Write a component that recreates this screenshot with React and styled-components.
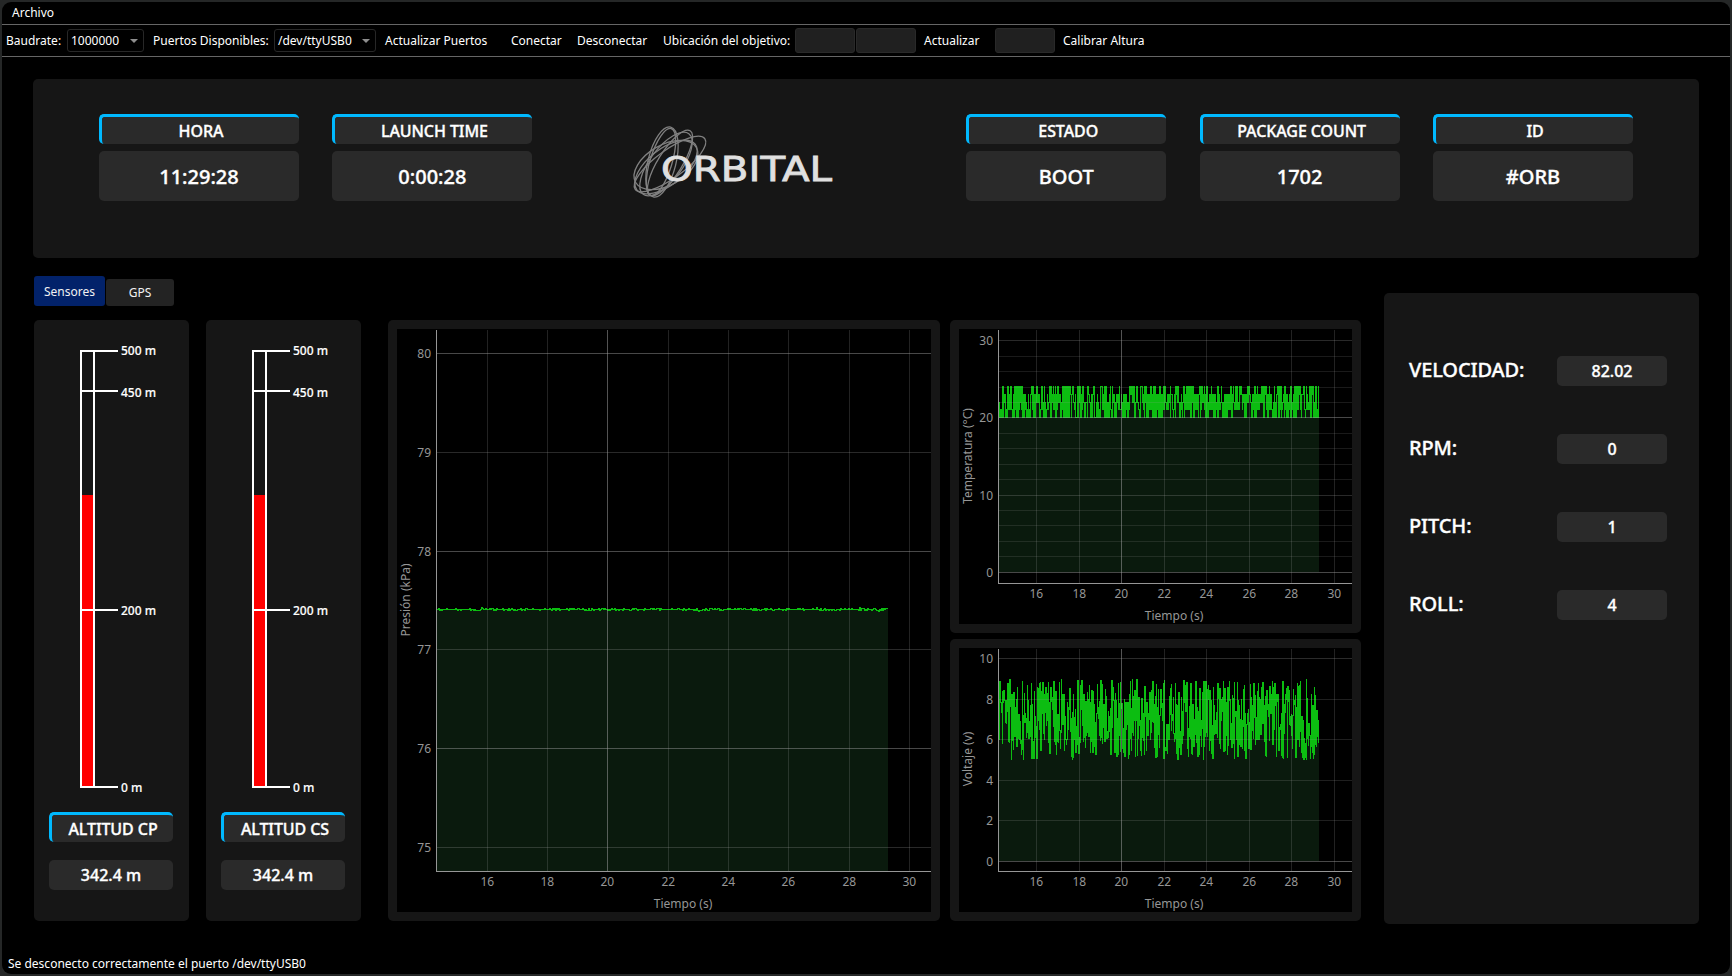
import React from "react";
import styled, { createGlobalStyle } from "styled-components";

const GlobalStyle = createGlobalStyle`
  * { box-sizing: border-box; }
  body {
    margin: 0;
    background: #252727;
    color: #fff;
    font: 12px/16px "Noto Sans", "Open Sans", sans-serif;
  }
`;

const Window = styled.div`
  display: flex;
  flex-direction: column;
  width: 1728px;
  height: 972px;
  margin: 2px;
  background: #000;
  border-radius: 9px;
  overflow: hidden;
`;

const MenuBar = styled.nav`
  height: 23px;
  padding: 3px 10px 0;
  border-bottom: 1px solid #666;
`;

const ToolBar = styled.div`
  display: flex;
  align-items: center;
  height: 32px;
  padding-left: 4px;
  border-bottom: 1px solid #666;
`;

const ToolText = styled.span`
  flex: 0 0 ${(p) => p.$w}px;
  white-space: nowrap;
`;

const Combo = styled.div`
  display: flex;
  align-items: center;
  justify-content: space-between;
  width: ${(p) => p.$w}px;
  height: 23px;
  margin-right: 9px;
  padding: 0 5px 0 3px;
  border: 1px solid #272727;
  border-radius: 3px;
`;

const Arrow = styled.i`
  border: 4px solid transparent;
  border-top: 4px solid #8e8e8e;
  border-bottom: 0;
`;

const Field = styled.div`
  width: 60px;
  height: 25px;
  margin-right: ${(p) => p.$gap}px;
  border: 1px solid #292929;
  border-radius: 3px;
  background: #202020;
`;

const Panel = styled.section`
  background: #161616;
  border-radius: 5px;
`;

const Header = styled(Panel)`
  display: grid;
  grid-template-columns: 200px 200px 1fr 200px 200px 200px;
  column-gap: 33.4px;
  height: 179px;
  margin: 22px 31px 0;
  padding: 35px 66px 0;
`;

const Title = styled.div`
  height: 30px;
  padding-left: 1px;
  border-top: 3px solid #00b9ff;
  border-left: 3px solid #00b9ff;
  border-radius: 5px;
  background: #2a2a2a;
  font-size: 16px;
  font-weight: 500;
  line-height: 28px;
  letter-spacing: -0.08px;
  text-align: center;
  -webkit-text-stroke: 0.35px #fff;
`;

const Value = styled.div`
  height: ${(p) => (p.$large ? 50 : 30)}px;
  border-radius: 5px;
  background: #2a2a2a;
  font-size: ${(p) => (p.$large ? 20 : 16)}px;
  font-weight: 500;
  line-height: ${(p) => (p.$large ? 52 : 30)}px;
  text-align: center;
  -webkit-text-stroke: 0.35px #fff;
`;

const Card = styled.div`
  display: flex;
  flex-direction: column;
  gap: 7px;
`;

const Logo = styled.svg`
  width: 230px;
  height: 100px;
  margin: -4px 0 0 50px;
`;

const Main = styled.main`
  display: flex;
  justify-content: space-between;
  height: 666px;
  padding: 0 31px 0 32px;
`;

const TabArea = styled.div`
  width: 1327px;
  padding-top: 18px;
`;

const Tabs = styled.div`
  display: flex;
  align-items: flex-end;
  gap: 1px;
  height: 30px;
`;

const Tab = styled.button`
  width: ${(p) => (p.$active ? 71 : 68)}px;
  height: ${(p) => (p.$active ? 30 : 27)}px;
  padding: ${(p) => (p.$active ? "2px 0 0" : "0")};
  border: 0;
  border-radius: 3px;
  background: ${(p) => (p.$active ? "#02226a" : "#232323")};
  color: #f2f2f2;
  font: inherit;
`;

const Sensors = styled.div`
  display: flex;
  height: 601px;
  margin-top: 14px;
`;

const AltitudePanel = styled(Panel)`
  display: flex;
  flex-direction: column;
  width: 155px;
  margin-right: ${(p) => p.$gap}px;
  padding: 22px 16px 31px 15px;
`;

const Gauge = styled.svg`
  width: 124px;
  height: 458px;
  flex: none;
  margin-bottom: 12px;
`;

const AltitudeTitle = styled(Title)`
  margin-bottom: 18px;
`;

const PlotPanel = styled(Panel)`
  padding: 9px;
`;

const PlotColumn = styled.div`
  display: flex;
  flex-direction: column;
  gap: 6px;
  margin-left: 10px;
`;

const Plot = styled.svg`
  display: block;
  background: #000;
`;

const Readings = styled(Panel)`
  display: flex;
  flex-direction: column;
  gap: 48px;
  width: 315px;
  height: 631px;
  margin-top: 35px;
  padding: 63px 32px 0 25px;
`;

const Reading = styled.div`
  display: grid;
  grid-template-columns: 1fr 110px;
`;

const ReadingName = styled.span`
  font-size: 20px;
  font-weight: 500;
  line-height: 27px;
  letter-spacing: -0.12px;
  -webkit-text-stroke: 0.35px #fff;
`;

const StatusBar = styled.footer`
  margin-top: 32px;
  padding-left: 6px;
`;

function TitledValue({ title, value }) {
  return (
    <Card>
      <Title>{title}</Title>
      <Value $large>{value}</Value>
    </Card>
  );
}

const orbits = [
  [46, 52, 14, 36, 14],
  [45, 52, 11, 35, 17],
  [54, 53, 12, 38, 32],
  [50, 54, 16, 38, 37],
  [54, 54, 14, 43, 54],
  [50, 57, 18, 37, 52],
  [50, 55, 20, 35, 60],
];

function OrbitalLogo() {
  return (
    <Logo viewBox="0 0 230 100">
      <g fill="none" stroke="#d8d8d8" strokeWidth="1.3" opacity="0.55">
        {orbits.map(([cx, cy, rx, ry, a], i) => (
          <ellipse key={i} cx={cx} cy={cy} rx={rx} ry={ry} transform={`rotate(${a} ${cx} ${cy})`} />
        ))}
      </g>
      <text
        x="45"
        y="70.5"
        fontFamily="DejaVu Sans, sans-serif"
        fontSize="34"
        fill="#e0e0e0"
        stroke="#e0e0e0"
        strokeWidth="0.8"
        textLength="171"
        lengthAdjust="spacingAndGlyphs"
      >
        ORBITAL
      </text>
    </Logo>
  );
}

const marks = [
  [8, "500 m", 13],
  [48, "450 m", 55],
  [267, "200 m", 273],
  [444, "0 m", 450],
];

function Altitude({ title, value, gap }) {
  return (
    <AltitudePanel $gap={gap}>
      <Gauge viewBox="0 0 124 458" shapeRendering="crispEdges">
        <rect x="33" y="153" width="11" height="293" fill="#f00" />
        <g fill="#fff">
          <rect x="31" y="8" width="2" height="438" />
          <rect x="44" y="8" width="2" height="438" />
          {marks.map(([y, label, base]) => (
            <g key={label}>
              <rect x="31" y={y} width="38" height="2" />
              <text x="72" y={base} fontSize="12" fontWeight="500" stroke="#fff" strokeWidth="0.15">
                {label}
              </text>
            </g>
          ))}
        </g>
      </Gauge>
      <AltitudeTitle>{title}</AltitudeTitle>
      <Value>{value}</Value>
    </AltitudePanel>
  );
}

function randomSource(seed) {
  let s = seed;
  return () => {
    s = (s * 1664525 + 1013904223) % 4294967296;
    return s / 4294967296;
  };
}

// One vertical span per pixel column, joined to the last sample of the column before.
function makeSpans({ x0, x1, seed, extra, sample }) {
  const rnd = randomSource(seed);
  const spans = [];
  let last = sample(rnd);
  for (let x = x0; x < x1; x += 1) {
    const values = [last, sample(rnd)];
    for (let room = extra; room > 0; room -= 1) {
      if (rnd() < room) values.push(sample(rnd));
    }
    last = values[values.length - 1];
    spans.push([x, Math.round(Math.min(...values)), Math.round(Math.max(...values))]);
  }
  return spans;
}

function Chart({ w, h, axisX, axisY, xs, rows, minor = [], spans, base, name, nameY, tickY, timeX, timeY }) {
  const area = spans.map(([x, top]) => `M${x} ${top}h1V${base}h-1z`).join("");
  const line = spans.map(([x, top, bottom]) => `M${x} ${top}h1V${bottom + 1}h-1z`).join("");
  return (
    <Plot width={w} height={h} viewBox={`0 0 ${w} ${h}`} shapeRendering="crispEdges">
      <path d={area} fill="#0a1a0d" />
      <path d={line} fill="#0cbd11" />
      <g fill="#a0a0a0">
        {xs.map((x, i) => (
          <rect key={x} x={x} y="1" width="1" height={axisY - 1} opacity={i === 2 ? 0.52 : 0.21} />
        ))}
        {rows.map(([y, , o]) => (
          <rect key={y} x={axisX} y={y} width={w - axisX} height="1" opacity={o * 1.6} />
        ))}
        {minor.map((y) => (
          <rect key={y} x={axisX} y={y} width={w - axisX} height="1" opacity="0.16" />
        ))}
      </g>
      <g fill="#969696">
        <rect x={axisX} y="1" width="1" height={axisY} />
        <rect x={axisX} y={axisY} width={w - axisX} height="1" />
        <g fontSize="12">
          {rows.map(([y, label]) => (
            <text key={y} x={axisX - 5} y={y + 5} textAnchor="end">{label}</text>
          ))}
          {xs.map((x, i) => (
            <text key={x} x={x + 0.3} y={tickY} textAnchor="middle">{16 + i * 2}</text>
          ))}
          <text x={timeX} y={timeY} textAnchor="middle">Tiempo (s)</text>
          <text transform={`translate(13 ${nameY}) rotate(-90)`} textAnchor="middle">{name}</text>
        </g>
      </g>
    </Plot>
  );
}

const pressure = {
  w: 534, h: 583, axisX: 39, axisY: 542,
  xs: [90, 150, 210, 271, 331, 391, 452, 512],
  rows: [[24, 80, 0.28], [123, 79, 0.16], [222, 78, 0.28], [320, 77, 0.16], [419, 76, 0.28], [518, 75, 0.16]],
  spans: makeSpans({ x0: 40, x1: 491, seed: 7, extra: 0, sample: (r) => 280 + (r() + r() + r() - 1.5) * 1.25 }),
  base: 542, name: "Presión (kPa)", nameY: 271, tickY: 557, timeX: 286, timeY: 579,
};

const smallXs = [77, 120, 162, 205, 247, 290, 332, 375];

const temperature = {
  w: 393, h: 295, axisX: 39, axisY: 254, xs: smallXs,
  rows: [[11, 30, 0.16], [88, 20, 0.28], [166, 10, 0.16], [243, 0, 0.28]],
  minor: [27, 42, 58, 73, 104, 119, 135, 150, 181, 196, 212, 227],
  spans: makeSpans({ x0: 40, x1: 360, seed: 21, extra: 1.5, sample: (r) => 88 - Math.floor(r() * 5) * 7.7 }),
  base: 243, name: "Temperatura (°C)", nameY: 127, tickY: 269, timeX: 215, timeY: 291,
};

const voltage = {
  w: 393, h: 264, axisX: 39, axisY: 223, xs: smallXs,
  rows: [[10, 10, 0.17], [51, 8, 0.12], [91, 6, 0.12], [132, 4, 0.12], [172, 2, 0.12], [213, 0, 0.28]],
  spans: makeSpans({ x0: 40, x1: 360, seed: 35, extra: 1.3, sample: (r) => 111.5 - r() * 81 }),
  base: 213, name: "Voltaje (v)", nameY: 111, tickY: 238, timeX: 215, timeY: 260,
};

const readings = [["VELOCIDAD:", "82.02"], ["RPM:", "0"], ["PITCH:", "1"], ["ROLL:", "4"]];

export default function App() {
  return (
    <>
      <GlobalStyle />
      <Window>
        <MenuBar>Archivo</MenuBar>
        <ToolBar>
          <ToolText $w={61}>Baudrate:</ToolText>
          <Combo $w={77}>1000000<Arrow /></Combo>
          <ToolText $w={121}>Puertos Disponibles:</ToolText>
          <Combo $w={102}>/dev/ttyUSB0<Arrow /></Combo>
          <ToolText $w={126}>Actualizar Puertos</ToolText>
          <ToolText $w={66}>Conectar</ToolText>
          <ToolText $w={86}>Desconectar</ToolText>
          <ToolText $w={132}>Ubicación del objetivo:</ToolText>
          <Field $gap={1} />
          <Field $gap={8} />
          <ToolText $w={71}>Actualizar</ToolText>
          <Field $gap={8} />
          <ToolText $w={90}>Calibrar Altura</ToolText>
        </ToolBar>
        <Header>
          <TitledValue title="HORA" value="11:29:28" />
          <TitledValue title="LAUNCH TIME" value="0:00:28" />
          <OrbitalLogo />
          <TitledValue title="ESTADO" value="BOOT" />
          <TitledValue title="PACKAGE COUNT" value="1702" />
          <TitledValue title="ID" value="#ORB" />
        </Header>
        <Main>
          <TabArea>
            <Tabs>
              <Tab $active>Sensores</Tab>
              <Tab>GPS</Tab>
            </Tabs>
            <Sensors>
              <Altitude title="ALTITUD CP" value="342.4 m" gap={17} />
              <Altitude title="ALTITUD CS" value="342.4 m" gap={27} />
              <PlotPanel><Chart {...pressure} /></PlotPanel>
              <PlotColumn>
                <PlotPanel><Chart {...temperature} /></PlotPanel>
                <PlotPanel><Chart {...voltage} /></PlotPanel>
              </PlotColumn>
            </Sensors>
          </TabArea>
          <Readings>
            {readings.map(([name, value]) => (
              <Reading key={name}>
                <ReadingName>{name}</ReadingName>
                <Value>{value}</Value>
              </Reading>
            ))}
          </Readings>
        </Main>
        <StatusBar>Se desconecto correctamente el puerto /dev/ttyUSB0</StatusBar>
      </Window>
    </>
  );
}
